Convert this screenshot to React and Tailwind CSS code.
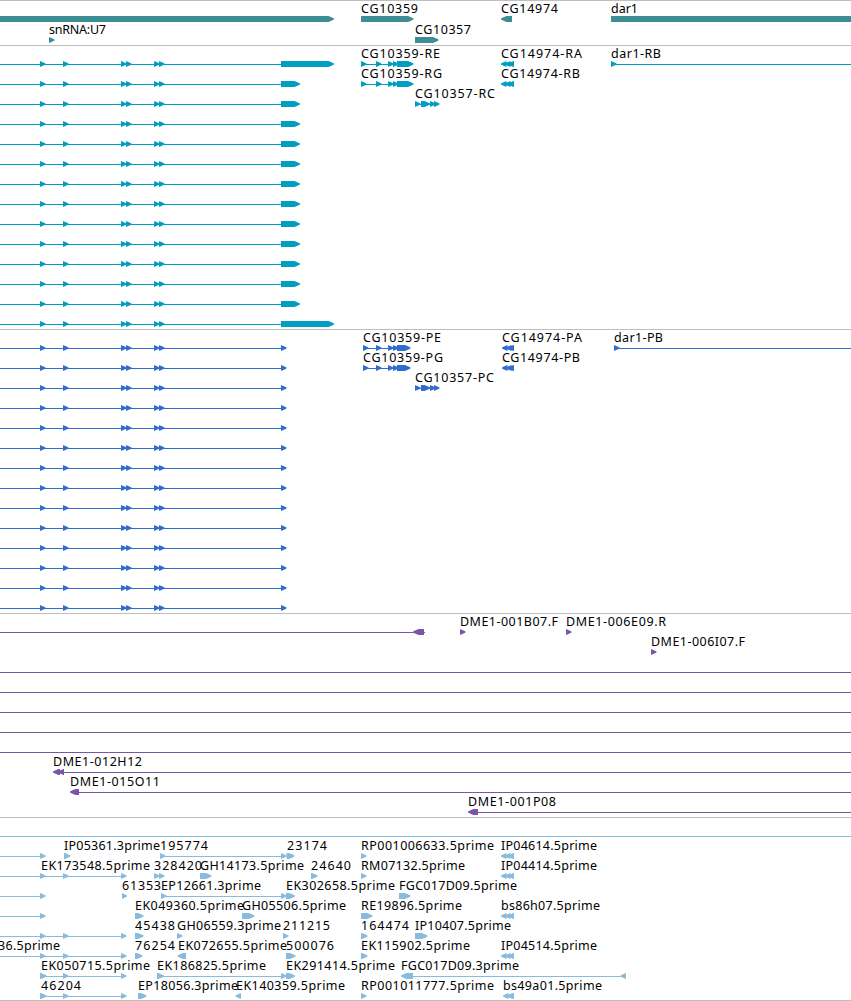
const LANE = 20;

const range = (n) => Array.from({ length: n }, (_, i) => i);

// Feature helpers. r = forward block, l = reverse block, line = intron / connector
const r = (from, to = from + 5.5) => ({ kind: 'r', from, to });
const l = (from, to = from + 5.5) => ({ kind: 'l', from, to });
const line = (from, to) => ({ kind: 'line', from, to });
const bar = (from, to) => ({ kind: 'bar', from, to });
const label = (text, from, to) => ({ kind: 'label', text, from, to });

const tripleLeft = (from) => [l(from, from + 5.5), l(from + 4, from + 9.5), l(508, 514)];
const backbone = [r(40), r(63), r(121), r(126), r(154), r(159)];
const upstream = [line(0, 123), r(40), r(63), r(121)];

const genes = [
    [
        r(0, 334),
        label('CG10359', 361, 418), r(361, 413.5),
        label('CG14974', 501, 558), l(501, 512),
        label('dar1', 611, 638), bar(611, 851),
    ],
    [
        label('snRNA:U7', 49, 106), r(49),
        label('CG10357', 415, 471), r(415, 438.5),
    ],
];

const transcriptExtras = [
    [
        label('CG10359-RE', 361, 440), line(361, 397), r(361), r(376), r(388), r(393), r(397, 413.5),
        label('CG14974-RA', 501, 582), ...tripleLeft(501),
        label('dar1-RB', 611, 661), r(611), line(611, 851),
    ],
    [
        label('CG10359-RG', 361, 442), line(361, 397), r(361), r(376), r(388), r(393), r(397, 413.5),
        label('CG14974-RB', 501, 580), ...tripleLeft(501),
    ],
    [
        label('CG10357-RC', 415, 495), line(415, 435), r(415), r(421, 430), r(430), r(434),
    ],
];

const transcripts = range(14).map((i) => [
    line(0, 282),
    ...backbone,
    r(281, i === 0 || i === 13 ? 334 : 300),
    ...(transcriptExtras[i] || []),
]);

const proteinExtras = [
    [
        label('CG10359-PE', 363, 441), line(363, 397), r(363), r(376), r(388), r(393), r(397, 410.5),
        label('CG14974-PA', 502, 582), ...tripleLeft(502),
        label('dar1-PB', 614, 663), r(614), line(614, 851),
    ],
    [
        label('CG10359-PG', 363, 443), line(363, 397), r(363), r(376), r(388), r(393), r(397, 410.5),
        label('CG14974-PB', 502, 580), ...tripleLeft(502),
    ],
    [
        label('CG10357-PC', 415, 494), line(415, 435), r(415), r(421, 430), r(430), r(434),
    ],
];

const proteins = range(14).map((i) => [
    line(0, 282),
    ...backbone,
    r(281, 286.5),
    ...(proteinExtras[i] || []),
]);

const clones = [
    [
        line(0, 425), l(413, 424),
        label('DME1-001B07.F', 460, 558), r(460),
        label('DME1-006E09.R', 566, 666), r(566),
    ],
    [label('DME1-006I07.F', 651, 745), r(651)],
    ...range(5).map(() => [line(0, 851)]),
    [label('DME1-012H12', 53, 142), l(53, 60), l(58, 64), line(60, 851)],
    [label('DME1-015O11', 70, 160), l(70, 79), line(78, 851)],
    [label('DME1-001P08', 468, 556), l(468, 478), line(477, 851)],
];

const ests = [
    [line(0, 851)],
    [
        line(0, 42), r(40),
        label('IP05361.3prime', 64, 160), r(64, 70.5),
        label('195774', 160, 208), line(160, 283), r(160), r(281),
        label('23174', 287, 327), r(286.5, 294.5),
        label('RP001006633.5prime', 361, 494), r(361),
        label('IP04614.5prime', 501, 597), ...tripleLeft(501),
    ],
    [
        ...upstream,
        label('EK173548.5prime', 41, 150),
        label('328420', 154, 202), r(154), r(159),
        label('GH14173.5prime', 200, 304), r(200, 211.5),
        label('24640', 311, 351), r(311, 317.5),
        label('RM07132.5prime', 361, 465), r(361),
        label('IP04414.5prime', 501, 597), ...tripleLeft(501),
    ],
    [
        line(0, 42), r(40),
        label('61353', 122, 161), r(122, 127),
        label('EP12661.3prime', 161, 261), line(161, 283), r(161), r(281), r(286, 295),
        label('EK302658.5prime', 286, 395),
        label('FGC017D09.5prime', 399, 517), r(399, 410.5),
    ],
    [
        line(0, 42), r(40),
        label('EK049360.5prime', 135, 244), r(135, 143.5),
        label('GH05506.5prime', 242, 346), r(242, 254.5),
        label('RE19896.5prime', 361, 462), r(361, 372.5),
        label('bs86h07.5prime', 501, 600), ...tripleLeft(501),
    ],
    [
        ...upstream,
        label('45438', 135, 175), r(135, 143.5),
        label('GH06559.3prime', 177, 281), r(177, 182.5),
        label('211215', 283, 330), r(283, 288.5),
        label('164474', 361, 409), r(361, 367.5),
        label('IP10407.5prime', 415, 511), r(415, 427.5),
    ],
    [
        ...upstream,
        label('36.5prime', -2, 60),
        label('76254', 135, 175), r(135, 142.5),
        label('EK072655.5prime', 178, 287), l(177.5, 186),
        label('500076', 286, 334), r(286, 295.5),
        label('EK115902.5prime', 361, 470), r(361, 367.5),
        label('IP04514.5prime', 501, 597), ...tripleLeft(501),
    ],
    [
        line(40, 123), r(40, 46.5), r(63), r(121),
        label('EK050715.5prime', 41, 150),
        label('EK186825.5prime', 157, 266), line(157, 283), r(157, 164), r(281), r(286, 295),
        label('EK291414.5prime', 286, 395),
        label('FGC017D09.3prime', 401, 519), l(401, 413), line(412, 622), l(620.5, 626),
    ],
    [
        line(40, 123), r(40, 46.5), r(63), r(121),
        label('46204', 41, 81),
        label('EP18056.3prime', 138, 238), r(138, 146.5),
        label('EK140359.5prime', 236, 345), l(235.5, 241),
        label('RP001011777.5prime', 361, 494), r(361),
        label('bs49a01.5prime', 503, 602), ...tripleLeft(503),
    ],
];

const Feature = ({ item }) => {
    const { kind, from, to, text } = item;
    if (kind === 'label') {
        return (
            <text x={from} y={-6} textLength={to - from} lengthAdjust="spacing" className="fill-black">
                {text}
            </text>
        );
    }
    if (kind === 'line') return <rect x={from} y={0} width={to - from} height={1} />;
    if (kind === 'bar') return <rect x={from} y={-3} width={to - from} height={6} />;

    // Arrow head takes the end of the block, with slightly bulged sides
    const tip = Math.min(5.5, to - from);
    const dir = kind === 'r' ? 1 : -1;
    const tail = kind === 'r' ? from : to;
    const head = kind === 'r' ? to : from;
    const neck = head - dir * tip;
    const mid = head - dir * 2;
    return <polygon points={`${tail},-3 ${neck},-3 ${mid},-1.5 ${head},-0.5 ${head},0.5 ${mid},1.5 ${neck},3 ${tail},3`} />;
};

const Track = ({ name, lanes, step = LANE, className }) => (
    <section aria-label={name} className={`w-full border-t border-[#bebebe] ${className}`}>
        <svg width="851" height="100%" className="block font-['Noto_Sans',sans-serif] text-[12.5px]" fill="currentColor">
            {lanes.map((items, i) => (
                <g key={i} transform={`translate(0 ${18 + i * step})`}>
                    {items.map((item, j) => <Feature key={j} item={item} />)}
                </g>
            ))}
        </svg>
    </section>
);

const App = () => (
    <main className="flex h-[1001px] w-[851px] flex-col overflow-hidden border-b border-[#bebebe] bg-white">
        <Track name="Genes" lanes={genes} step={21} className="h-[45px] text-[#3d8e94]" />
        <Track name="Transcripts" lanes={transcripts} className="h-[284px] text-[#009fc1]" />
        <Track name="Proteins" lanes={proteins} className="h-[284px] text-[#316dce]" />
        <Track name="Clones" lanes={clones} className="h-[204px] text-[#7857a8]" />
        <Track name="ESTs" lanes={ests} className="h-[183px] text-[#88bbdd]" />
    </main>
);

export default App;
